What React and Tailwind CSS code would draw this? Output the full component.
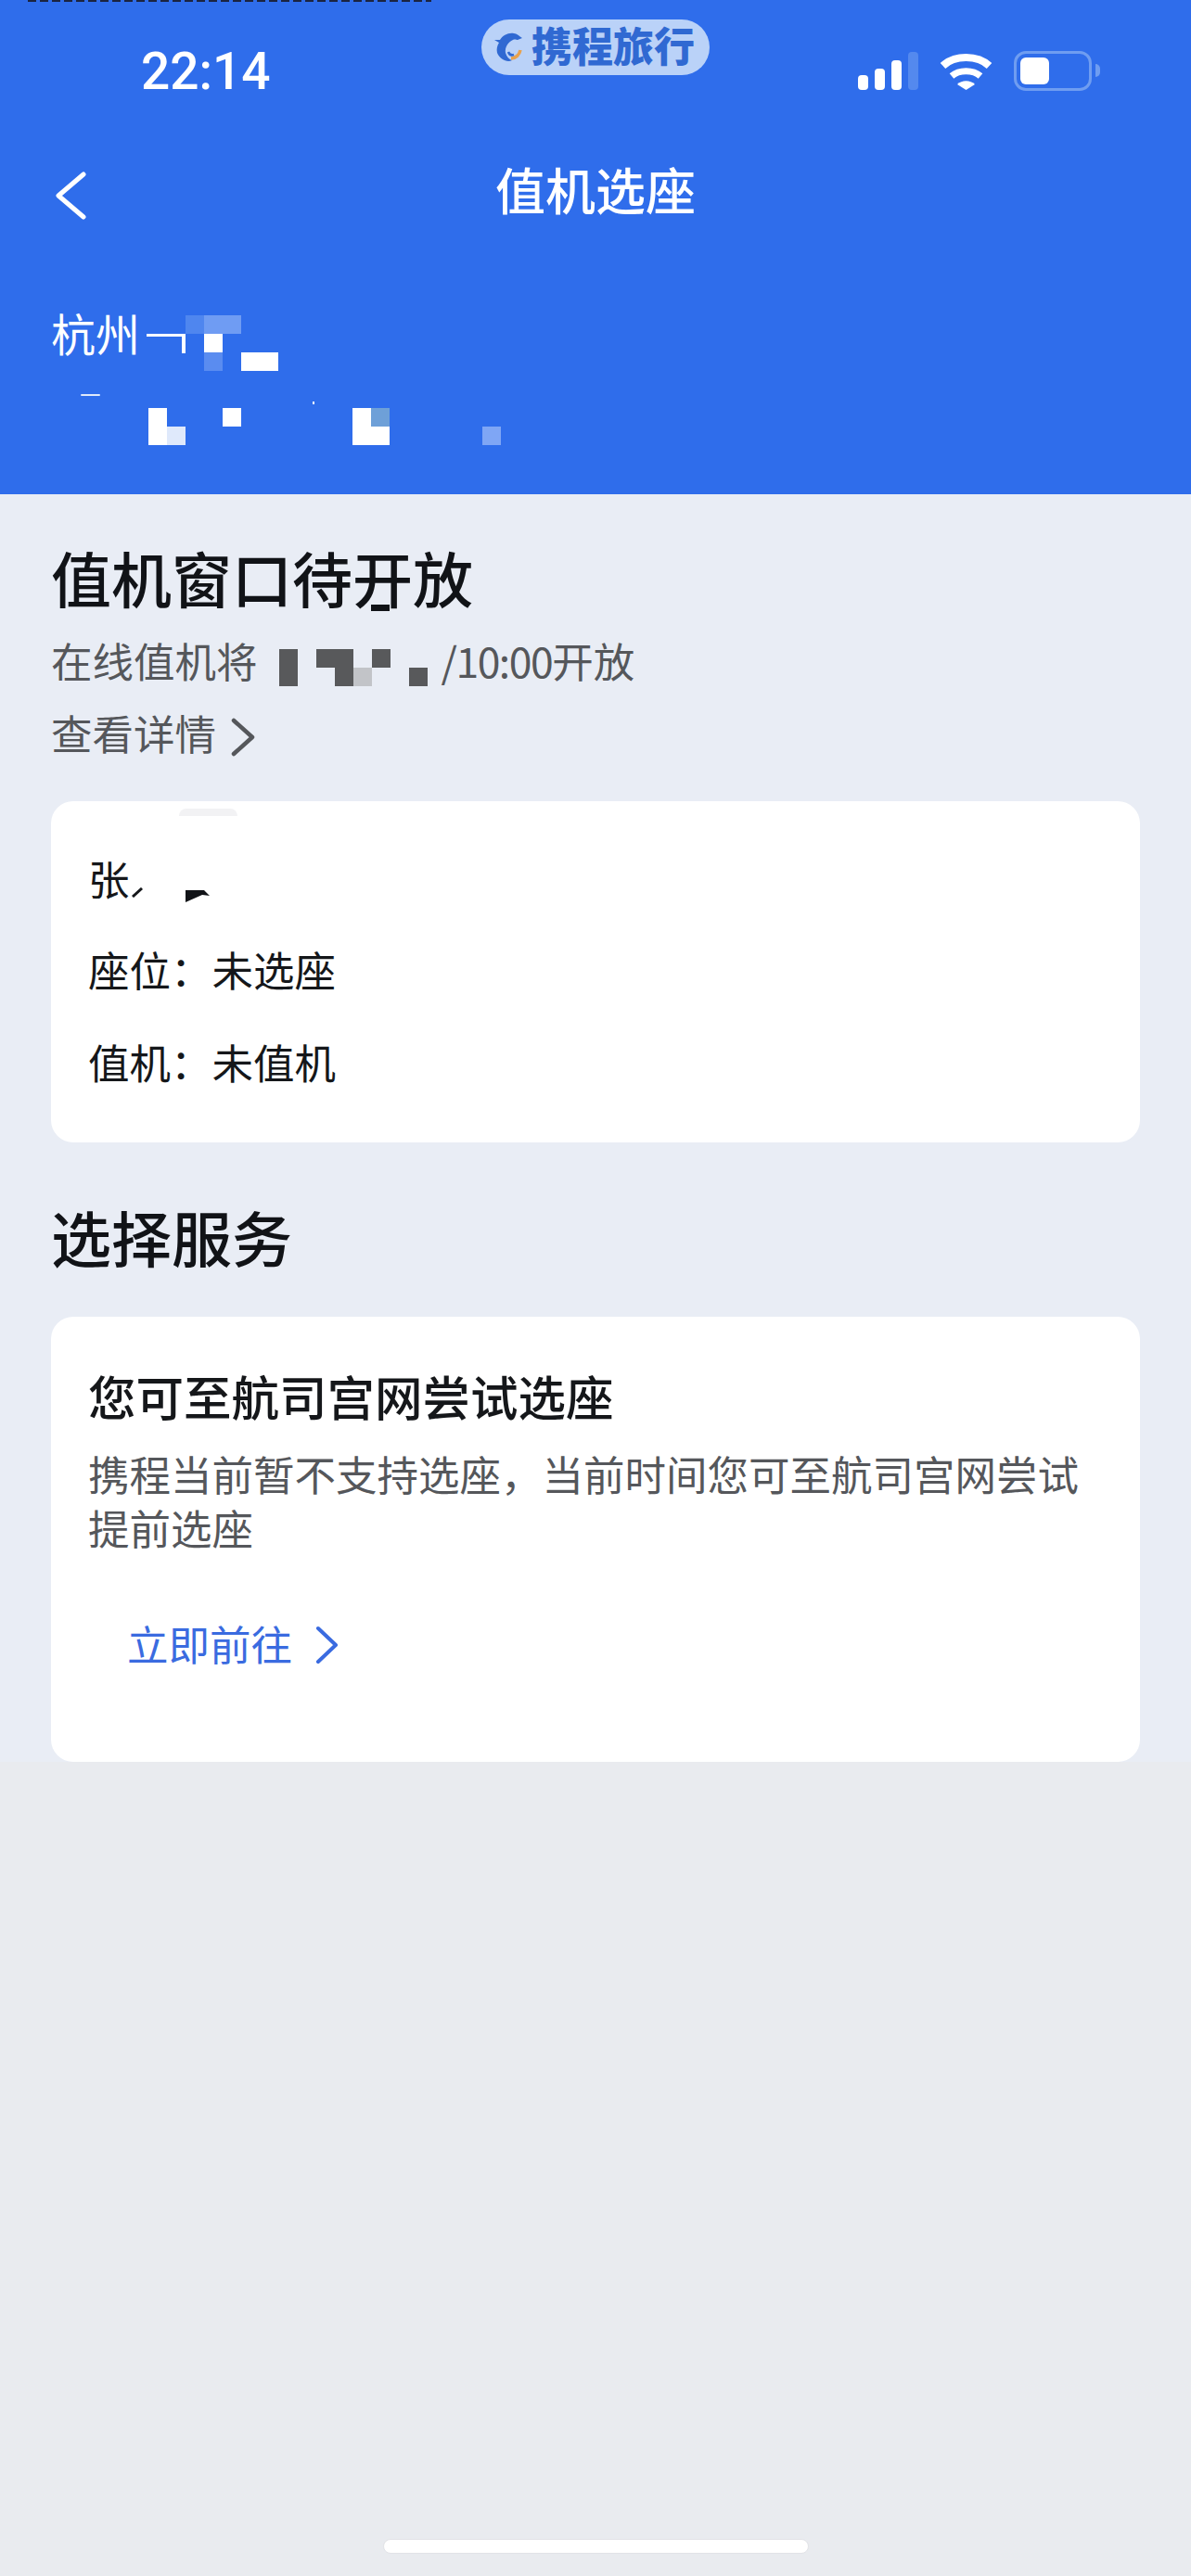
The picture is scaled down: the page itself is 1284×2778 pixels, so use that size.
import React from 'react';

const StatusIcons = () => (
  <div className="flex items-center">
    {/* signal bars */}
    <div className="flex items-end gap-[7px] h-[42px]">
      <div className="w-[11px] h-[16px] rounded-[4px] bg-white" />
      <div className="w-[11px] h-[23px] rounded-[4px] bg-white" />
      <div className="w-[11px] h-[32px] rounded-[4px] bg-white" />
      <div className="w-[11px] h-[41px] rounded-[4px] bg-[#5489ee]" />
    </div>
    <svg className="ml-[23px]" width="57" height="42" viewBox="0 0 57 42" fill="none">
      <path d="M3.5 16C16 4 41 4 53.5 16" stroke="#fff" strokeWidth="8" />
      <path d="M13 27C21 20 36 20 44 27" stroke="#fff" strokeWidth="7" />
      <path d="M19 36C24 31 33 31 38 36L28.5 42Z" fill="#fff" />
    </svg>
    {/* battery */}
    <div className="ml-[23px] w-[84px] h-[43px] rounded-[13px] border-[3px] border-[#6f9df1] p-[4px]">
      <div className="w-[31px] h-[29px] rounded-[6px] bg-white" />
    </div>
    <div className="ml-[4px] w-[5px] h-[14px] rounded-r-full bg-[#6f9df1]" />
  </div>
);

const LogoPill = () => (
  <div className="absolute left-[519px] top-[21px] w-[246px] h-[60px] rounded-full bg-[#bad2f8] flex items-center pl-[14px]">
    <svg width="30" height="33" viewBox="0 0 30 33" fill="none">
      <path d="M6 8C9 3 15 0 21 1C24 1 27 4 30 6L25 8C24 8 22 7 20 8C15 10 11 16 12 22C13 26 16 29 19 30C14 33 6 29 3 22C2 18 3 14 5 11L0 8Z" fill="#3069d2" />
      <path d="M18 28C23 28 27 24 28 19" stroke="#e8a24e" strokeWidth="3.5" />
      <path d="M15 21C16 24 18 25 21 24" stroke="#3069d2" strokeWidth="2.5" />
    </svg>
    <span className="ml-[10px] -mt-[7px] text-[44px] leading-[60px] font-black text-[#3069d2]">携程旅行</span>
  </div>
);

const Header = () => (
  <div className="relative h-[533px] shrink-0 bg-[#2f6deb] flex flex-col text-white">
    <div className="absolute left-[30px] top-0 w-[435px] h-[2px] bg-[repeating-linear-gradient(90deg,#1b2440_0_9px,transparent_9px_13px)]" />
    <LogoPill />

    <div className="h-[152px] shrink-0 flex items-center justify-between pl-[152px] pr-[98px]">
      <span className="pt-[2px] font-['Roboto','Liberation_Sans',sans-serif] font-medium text-[55px] leading-[60px]">22:14</span>
      <StatusIcons />
    </div>

    <div className="h-[110px] shrink-0 grid grid-cols-[1fr_auto_1fr] items-center">
      <svg className="ml-[58px] mt-[8px]" width="36" height="52" viewBox="0 0 36 52" fill="none">
        <path d="M32 3L5 26L32 49" stroke="#fff" strokeWidth="5" strokeLinecap="round" strokeLinejoin="round" />
      </svg>
      <span className="pb-[6px] text-[54px] leading-[70px] font-medium">值机选座</span>
      <div />
    </div>

    {/* route, partly hidden by a mosaic */}
    <div className="relative flex-1 pt-[78px]">
      <div className="flex items-start pl-[55px]">
        <span className="-mt-[12px] text-[48px] leading-[60px]">杭州</span>
        <div className="mt-[20px] ml-[7px] w-[42px] h-[21px] border-t-[3px] border-r-[4px] border-white" />
        <div className="grid grid-cols-[repeat(5,20px)] auto-rows-[20px]">
          <div className="col-start-1 row-start-1 bg-[#4f86ef]" />
          <div className="col-start-2 col-span-2 row-start-1 bg-[#6f9cf3]" />
          <div className="col-start-2 row-start-2 bg-white" />
          <div className="col-start-2 row-start-3 bg-[#5a8cf0]" />
          <div className="col-start-4 col-span-2 row-start-3 bg-white" />
        </div>
      </div>
      <div className="absolute left-[87px] top-[163px] w-[21px] h-[2px] rounded-full bg-[#dfe9fb]" />
      <div className="absolute left-[337px] top-[171px] w-[2px] h-[3px] bg-white" />
      <div className="mt-[40px] ml-[160px] grid grid-cols-[repeat(19,20px)] auto-rows-[20px]">
        <div className="col-start-1 row-start-1 row-span-2 bg-white" />
        <div className="col-start-2 row-start-2 bg-[#dfe9fb]" />
        <div className="col-start-5 row-start-1 bg-white" />
        <div className="col-start-12 row-start-1 row-span-2 bg-white" />
        <div className="col-start-13 row-start-1 bg-[#6ea0d8]" />
        <div className="col-start-13 row-start-2 bg-white" />
        <div className="col-start-19 row-start-2 bg-[#7fa6f5]" />
      </div>
    </div>
  </div>
);

const OpenNotice = () => (
  <>
    <div className="relative mt-[49px] text-[65px] leading-[80px] font-medium text-[#111317]">
      值机窗口待开放
      <div className="absolute left-[345px] top-[70px] w-[20px] h-[7px] bg-[#111317]" />
    </div>
    <div className="mt-[20px] flex text-[44.5px] leading-[60px] text-[#55575b]">
      <span>在线值机将</span>
      <div className="w-[198px] pl-[23px] pt-[18px]">
        <div className="grid grid-cols-[repeat(8,20px)] auto-rows-[20px]">
          <div className="col-start-1 row-start-1 row-span-2 bg-[#58595b]" />
          <div className="col-start-3 col-span-2 row-start-1 bg-[#58595b]" />
          <div className="col-start-4 row-start-2 bg-[#58595b]" />
          <div className="col-start-5 row-start-2 bg-[#c2c4c8]" />
          <div className="col-start-6 row-start-1 bg-[#58595b]" />
          <div className="col-start-8 row-start-2 bg-[#58595b]" />
        </div>
      </div>
      <span className="tracking-[-1.5px]">/10:00</span>
      <span>开放</span>
    </div>
    <div className="mt-[18px] flex items-center text-[44.5px] leading-[60px] text-[#55575b]">
      <span>查看详情</span>
      <svg className="ml-[15px] mt-[9px]" width="28" height="42" viewBox="0 0 28 42" fill="none">
        <path d="M4 3L24 21L4 39" stroke="#55575b" strokeWidth="4.5" strokeLinecap="round" strokeLinejoin="round" />
      </svg>
    </div>
  </>
);

const PassengerCard = () => (
  <div className="relative mt-[44px] h-[368px] rounded-[24px] bg-white pt-[53px] px-[40px] text-[44.5px] leading-[60px] text-[#15171a]">
    <div className="absolute left-[138px] top-[8px] w-[63px] h-[8px] rounded-t-full bg-[#f2f2f4]" />
    <div className="flex items-start h-[60px]">
      <span>张</span>
      <svg className="mt-[40px] ml-[2px]" width="12" height="11" viewBox="0 0 12 11" fill="none">
        <path d="M1 10L11 1" stroke="#15171a" strokeWidth="3" />
      </svg>
      <svg className="mt-[43px] ml-[46px]" width="26" height="13" viewBox="0 0 26 13" fill="none">
        <path d="M0 0H20L26 6L18 5L0 13Z" fill="#111317" />
      </svg>
    </div>
    <div className="mt-[38px]">座位：未选座</div>
    <div className="mt-[40px]">值机：未值机</div>
  </div>
);

const ServiceCard = () => (
  <div className="mt-[47px] h-[480px] rounded-[24px] bg-white pt-[50px] px-[40px]">
    <div className="text-[51.5px] leading-[70px] font-medium text-[#15171a]">您可至航司宫网尝试选座</div>
    <div className="mt-[20px] text-[44.5px] leading-[58px] text-[#55575b]">
      携程当前暂不支持选座，当前时间您可至航司宫网尝试提前选座
    </div>
    <div className="mt-[66px] ml-[42px] flex items-center text-[44.5px] leading-[60px] text-[#3a6be0]">
      <span>立即前往</span>
      <svg className="ml-[23px] mt-[3px]" width="28" height="42" viewBox="0 0 28 42" fill="none">
        <path d="M5 3L24 21L5 39" stroke="#3a6be0" strokeWidth="4" strokeLinecap="round" strokeLinejoin="round" />
      </svg>
    </div>
  </div>
);

export default function App() {
  return (
    <div className="w-[1284px] h-[2778px] overflow-hidden flex flex-col bg-[#e9ebef] font-['Noto_Sans_CJK_SC','Noto_Sans',sans-serif]">
      <Header />
      <div className="h-[1367px] shrink-0 bg-[#e9edf5] px-[55px]">
        <OpenNotice />
        <PassengerCard />
        <div className="mt-[61px] text-[65px] leading-[80px] font-medium text-[#111317]">选择服务</div>
        <ServiceCard />
      </div>
      <div className="flex-1 flex items-end justify-center pb-[24px]">
        <div className="w-[459px] h-[16px] rounded-full bg-white border border-[#e2e3e7]" />
      </div>
    </div>
  );
}
